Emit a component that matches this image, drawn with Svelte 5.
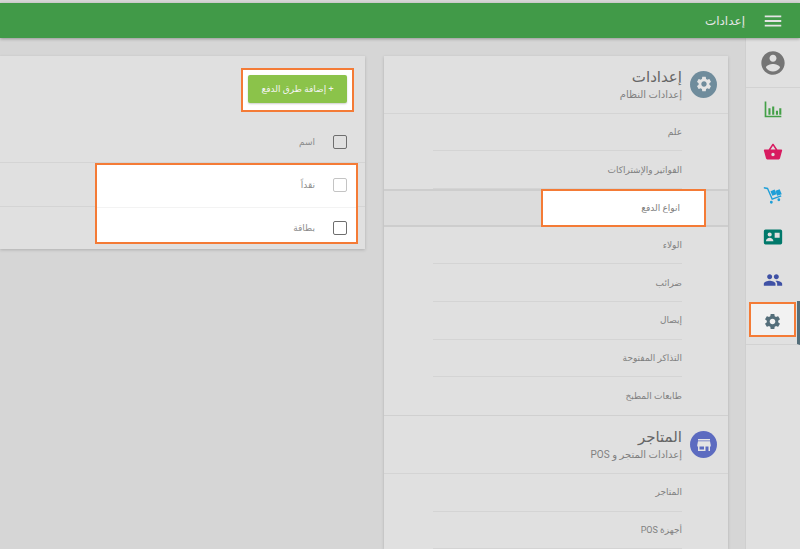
<script>
  const icons = {
    account: 'M12 2C6.48 2 2 6.48 2 12s4.48 10 10 10 10-4.48 10-10S17.52 2 12 2zm0 3c1.66 0 3 1.34 3 3s-1.34 3-3 3-3-1.34-3-3 1.34-3 3-3zm0 14.2c-2.5 0-4.71-1.28-6-3.22.03-1.99 4-3.08 6-3.08 1.99 0 5.97 1.09 6 3.08-1.29 1.94-3.5 3.22-6 3.22z',
    chart: 'M2 3h2v17h18v1.800H2zM6.500 11h2.500v8H6.500zM11 9h2.500v10H11zM15.500 14H18v5h-2.500zM19.500 11H22v8h-2.500z',
    basket: 'M17.21 9l-4.38-6.56c-.19-.28-.51-.42-.83-.42-.32 0-.64.14-.83.43L6.79 9H2c-.55 0-1 .45-1 1 0 .09.01.18.04.27l2.54 9.27c.23.84 1 1.46 1.92 1.46h13c.92 0 1.69-.62 1.93-1.46l2.54-9.27L23 10c0-.55-.45-1-1-1h-4.79zM9 9l3-4.4L15 9H9zm3 8c-1.1 0-2-.9-2-2s.9-2 2-2 2 .9 2 2-.9 2-2 2z',
    cart: 'M1 2.500l5 .8 5.500 12.500 10-3.600.6 1.600-11.500 4.200L5 5 1 4.300zM9 7.500l5-2 2.200 5.500-5 2zM15 7l5-2 2.500 6-5.500 2zM10 19a1.700 1.700 0 1 1 0 3.400 1.700 1.700 0 0 1 0-3.400zm9-3a1.700 1.700 0 1 1 0 3.400 1.700 1.700 0 0 1 0-3.400z',
    card: 'M3 3h18a2 2 0 0 1 2 2v14a2 2 0 0 1-2 2H3a2 2 0 0 1-2-2V5a2 2 0 0 1 2-2zm5 3.500a2.500 2.500 0 1 0 0 5 2.500 2.500 0 0 0 0-5zM3.500 17h9c0-2.400-2.500-4-4.500-4s-4.500 1.600-4.500 4zM14 7v6h6V7z',
    people: 'M16 11c1.66 0 2.99-1.34 2.99-3S17.66 5 16 5c-1.66 0-3 1.34-3 3s1.34 3 3 3zm-8 0c1.66 0 2.99-1.34 2.99-3S9.66 5 8 5C6.34 5 5 6.34 5 8s1.34 3 3 3zm0 2c-2.33 0-7 1.17-7 3.5V19h14v-2.5c0-2.33-4.670-3.500-7-3.500zm8 0c-.29 0-.62.02-.97.05 1.16.84 1.970 1.970 1.970 3.450V19h6v-2.500c0-2.330-4.670-3.500-7-3.500z',
    settings: 'M19.14 12.94c.04-.3.06-.61.06-.94 0-.32-.02-.64-.07-.94l2.03-1.58c.18-.14.23-.41.12-.61l-1.92-3.32c-.12-.22-.37-.29-.59-.22l-2.39.96c-.5-.38-1.03-.7-1.62-.94l-.36-2.54c-.04-.24-.24-.41-.48-.41h-3.84c-.24 0-.43.17-.47.41l-.36 2.54c-.59.24-1.13.57-1.62.94l-2.39-.96c-.22-.08-.47 0-.59.22L2.74 8.87c-.12.21-.08.47.12.61l2.03 1.58c-.05.3-.09.63-.09.94s.02.64.07.94l-2.03 1.58c-.18.14-.23.41-.12.61l1.92 3.32c.12.22.37.29.59.22l2.39-.96c.5.38 1.03.7 1.62.94l.36 2.54c.05.24.24.41.48.41h3.84c.24 0 .44-.17.47-.41l.36-2.54c.59-.24 1.13-.56 1.62-.94l2.39.96c.22.08.47 0 .59-.22l1.92-3.32c.12-.22.07-.47-.12-.61l-2.01-1.58zM12 15.6c-1.98 0-3.6-1.62-3.6-3.6s1.62-3.6 3.6-3.6 3.6 1.62 3.6 3.6-1.62 3.6-3.6 3.6z',
    store: 'M20 4H4v2h16V4zm1 10v-2l-1-5H4l-1 5v2h1v6h10v-6h4v6h2v-6h1zm-9 4H6v-4h6v4z',
  };

  const nav = [
    { icon: 'chart', color: '#43a047' },
    { icon: 'basket', color: '#d81b60' },
    { icon: 'cart', color: '#1e9fd8' },
    { icon: 'card', color: '#00796b' },
    { icon: 'people', color: '#3f51a5' },
  ];

  const sections = [
    {
      title: 'إعدادات',
      sub: 'إعدادات النظام',
      icon: 'settings',
      color: '#6f8c9c',
      rows: ['علم', 'الفواتير والإشتراكات', 'انواع الدفع', 'الولاء', 'ضرائب', 'إيصال', 'التذاكر المفتوحة', 'طابعات المطبخ'],
    },
    {
      title: 'المتاجر',
      sub: 'إعدادات المتجر و POS',
      icon: 'store',
      color: '#5c6bc0',
      rows: ['المتاجر', 'أجهزة POS'],
    },
  ];
</script>

{#snippet icon(name, size, color)}
  <svg viewBox="0 0 24 24" width={size} height={size} fill={color} aria-hidden="true"><path fill-rule="evenodd" d={icons[name]} /></svg>
{/snippet}

<div class="page" dir="rtl">
  <header class="topbar">
    <svg class="burger" viewBox="0 0 24 24" width="22" height="22" fill="#e4e4e4"><path d="M3 18h18v-2H3v2zm0-5h18v-2H3v2zm0-7v2h18V6H3z" /></svg>
    <span class="topbar-title">إعدادات</span>
  </header>

  <div class="body">
    <nav class="rail">
      <div class="rail-user">{@render icon('account', 28, '#757575')}</div>
      {#each nav as item}
        <div class="rail-item">{@render icon(item.icon, 20, item.color)}</div>
      {/each}
      <div class="rail-item active">
        <span class="spot">{@render icon('settings', 19, '#546e7a')}</span>
      </div>
    </nav>

    <div class="content">
      <section class="card menu">
        {#each sections as s}
          <div class="menu-head">
            <span class="avatar" style="background: {s.color}">{@render icon(s.icon, 18, '#e4e4e4')}</span>
            <div class="head-text">
              <div class="head-title">{s.title}</div>
              <div class="head-sub">{s.sub}</div>
            </div>
          </div>
          {#each s.rows as row}
            <div class="menu-row" class:selected={row === 'انواع الدفع'}>
              {#if row === 'انواع الدفع'}
                <span class="row-spot">{row}</span>
              {:else}
                <span class="row-label">{row}</span>
              {/if}
            </div>
          {/each}
        {/each}
      </section>

      <section class="card list">
        <div class="toolbar">
          <div class="btn-spot">
            <button type="button" class="add">+ إضافة طرق الدفع</button>
          </div>
        </div>
        <div class="table">
          <div class="tr head">
            <span class="check"></span>
            <span class="cell">اسم</span>
          </div>
          <div class="tr first">
            <span class="check faint"></span>
            <span class="cell">نقداً</span>
          </div>
          <div class="tr last">
            <span class="check"></span>
            <span class="cell">بطاقة</span>
          </div>
          <div class="row-spot-bg"></div>
        </div>
      </section>
    </div>
  </div>
</div>

<style>
  :global(body) {
    margin: 0;
    background: #d6d6d6;
  }

  .page {
    width: 800px;
    height: 549px;
    overflow: hidden;
    font-family: Roboto, "DejaVu Sans", sans-serif;
    color: #666;
    background: #d6d6d6;
    padding-top: 3px;
    box-sizing: border-box;
    display: flex;
    flex-direction: column;
  }

  .topbar {
    height: 35px;
    flex: none;
    background: #419a48;
    box-shadow: 0 1px 3px rgba(0, 0, 0, 0.3);
    display: flex;
    align-items: center;
    padding-right: 16px;
    gap: 17px;
    color: #e6e6e6;
    position: relative;
  }

  .topbar-title {
    font-size: 12px;
  }

  .body {
    flex: 1;
    display: flex;
    min-height: 0;
  }

  .rail {
    width: 54px;
    flex: none;
    background: #e0e0e0;
    border-left: 1px solid #cfcfcf;
    display: flex;
    flex-direction: column;
  }

  .rail-user {
    height: 49px;
    display: flex;
    align-items: center;
    justify-content: center;
    border-bottom: 1px solid #d2d2d2;
  }

  .rail-item {
    height: 42.7px;
    display: flex;
    align-items: center;
    justify-content: center;
    position: relative;
  }

  .rail-item.active {
    border-right: 3px solid #546e7a;
    border-bottom: 1px solid #d2d2d2;
    justify-content: flex-start;
    align-items: flex-start;
    padding-right: 1px;
  }

  .spot {
    width: 47px;
    height: 35px;
    box-sizing: border-box;
    margin-top: 1px;
    padding-top: 4px;
    background: #f2f2f2;
    border: 2px solid #f47b36;
    display: flex;
    align-items: center;
    justify-content: center;
  }

  .content {
    flex: 1;
    display: flex;
    align-items: flex-start;
    padding: 18px 17px 0 0;
    gap: 19px;
    min-width: 0;
  }

  .card {
    background: #e0e0e0;
    box-shadow: 0 1px 3px rgba(0, 0, 0, 0.18);
  }

  .menu {
    width: 344px;
    flex: none;
  }

  .menu-head {
    height: 59px;
    box-sizing: border-box;
    display: flex;
    align-items: center;
    gap: 8px;
    padding-right: 11px;
    border-bottom: 1px solid #d4d4d4;
    border-top: 1px solid #d0d0d0;
  }

  .menu-head:first-child {
    height: 57.500px;
    border-top: 0;
  }

  .avatar {
    width: 27px;
    height: 27px;
    border-radius: 50%;
    display: flex;
    align-items: center;
    justify-content: center;
    flex: none;
  }

  .head-title {
    font-size: 15px;
    line-height: 18px;
    margin-bottom: 2px;
    color: #666;
  }

  .head-sub {
    font-size: 10px;
    line-height: 13px;
    color: #808080;
  }

  .menu-row {
    height: 37.700px;
    box-sizing: border-box;
    margin: 0 46px 0 49px;
    display: flex;
    align-items: center;
    border-bottom: 1px solid #d4d4d4;
    font-size: 9px;
    color: #808080;
  }

  .menu-row:has(+ .menu-head) {
    border-bottom: 0;
  }

  .menu-row.selected {
    margin: 0;
    padding-right: 22px;
    border-top: 2px solid #cdcdcd;
    border-bottom: 2px solid #cdcdcd;
    background: #dcdcdc;
  }

  .row-spot {
    width: 165px;
    height: 38px;
    box-sizing: border-box;
    flex: none;
    background: #fff;
    border: 2px solid #f47b36;
    display: flex;
    align-items: center;
    padding-right: 24px;
    color: #808080;
  }

  .list {
    flex: 1;
    min-width: 0;
    height: 193px;
  }

  .toolbar {
    display: flex;
    padding: 12px 11px 0 0;
  }

  .btn-spot {
    box-sizing: border-box;
    width: 113px;
    height: 44px;
    padding-bottom: 2px;
    background: #fff;
    border: 2px solid #f47b36;
    display: flex;
    align-items: center;
    justify-content: center;
  }

  .add {
    width: 99px;
    height: 28px;
    border: 0;
    border-radius: 2px;
    background: #8bc34a;
    color: #f4f4f4;
    font: inherit;
    font-size: 9px;
    padding: 0;
    box-shadow: 0 1px 2px rgba(0, 0, 0, 0.2);
  }

  .table {
    position: relative;
    margin-top: 11px;
  }

  /* white spotlight behind the two data rows, the texts and checkboxes stay above it */
  .row-spot-bg {
    position: absolute;
    top: 40px;
    right: 7px;
    width: 263px;
    height: 81px;
    box-sizing: border-box;
    background: linear-gradient(#f3f3f3, #f3f3f3) 0 42px / 100% 1px no-repeat #fff;
    border: 2px solid #f47b36;
  }

  .tr {
    height: 41px;
    box-sizing: border-box;
    display: flex;
    align-items: center;
    gap: 18px;
    padding-right: 18px;
    font-size: 9px;
    color: #8c8c8c;
    border-bottom: 1px solid #d4d4d4;
  }

  .tr.head {
    height: 40px;
    padding-bottom: 1px;
  }

  .tr.first {
    height: 44px;
  }

  .tr.last {
    border-bottom: 0;
  }

  .cell,
  .check {
    position: relative;
    z-index: 1;
  }

  .check {
    width: 14px;
    height: 14px;
    box-sizing: border-box;
    border: 1.500px solid #6e6e6e;
    border-radius: 2px;
    flex: none;
  }

  .check.faint {
    border-color: #c4c4c4;
  }
</style>
